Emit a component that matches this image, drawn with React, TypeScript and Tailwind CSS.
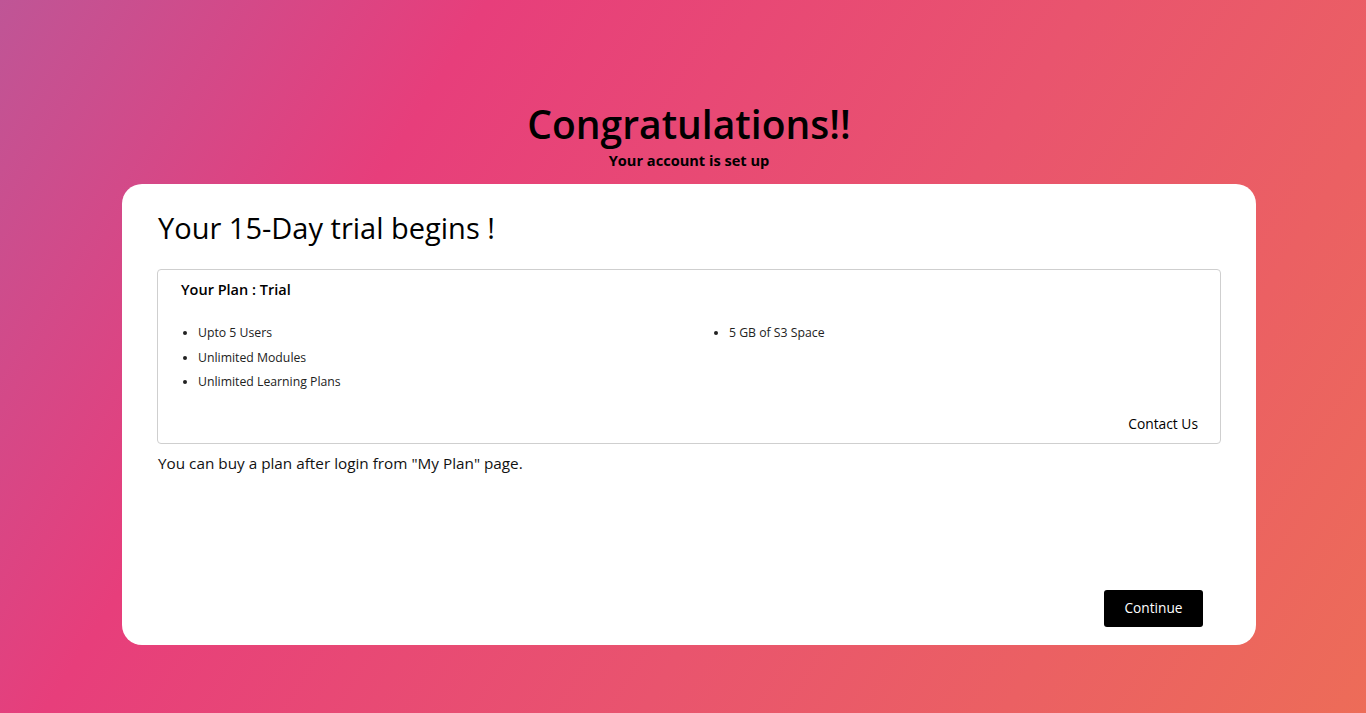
import React from 'react'

const features = ['Upto 5 Users', 'Unlimited Modules', 'Unlimited Learning Plans']

export default function App() {
  return (
    <div
      className="min-h-[713px] w-full bg-[linear-gradient(122deg,#bf5596_0%,#e73e7b_27%,#e9546e_60%,#ed6c58_100%)] pl-[122px] pr-[110px] pt-[102px] text-black"
      style={{ fontFamily: '"Open Sans", "Liberation Sans", sans-serif' }}
    >
      {/* header */}
      <div className="flex flex-col items-center">
        <h1 className="text-[39px] font-semibold leading-[44px]">Congratulations!!</h1>
        <p className="mt-[5px] text-[14.6px] font-bold leading-[18px]">Your account is set up</p>
      </div>

      {/* card */}
      <div className="mt-[15px] flex h-[461px] flex-col rounded-[20px] bg-white px-[35px] pt-[26px] pb-[18px]">
        <h2 className="pl-[1px] text-[29px] font-normal leading-[36px]">Your 15-Day trial begins !</h2>

        <div className="mt-[23px] flex h-[175px] flex-col rounded-[4px] border border-[#cfcfcf]">
          <h3 className="pl-[23px] pt-[10px] text-[14.5px] font-semibold leading-[20px]">Your Plan : Trial</h3>
          <div className="mt-[24px] grid grid-cols-2 text-[12.25px] leading-[17px] text-[#222]">
            <ul className="list-disc space-y-[7.5px] pl-[40px]">
              {features.map((f) => (
                <li key={f}>{f}</li>
              ))}
            </ul>
            <ul className="list-disc pl-[40px]">
              <li>5 GB of S3 Space</li>
            </ul>
          </div>
          <div className="mt-auto flex justify-end pr-[22px] pb-[10px]">
            <span className="text-[13.8px] font-medium leading-[18px]">Contact Us</span>
          </div>
        </div>

        <p className="mt-[9px] pl-[1px] text-[15.3px] leading-[20px] text-[#111]">
          You can buy a plan after login from "My Plan" page.
        </p>

        <div className="mt-auto flex justify-end pr-[18px]">
          <button className="h-[37px] w-[99px] rounded-[3px] bg-black text-[13.7px] font-medium text-white">
            Continue
          </button>
        </div>
      </div>
    </div>
  )
}
